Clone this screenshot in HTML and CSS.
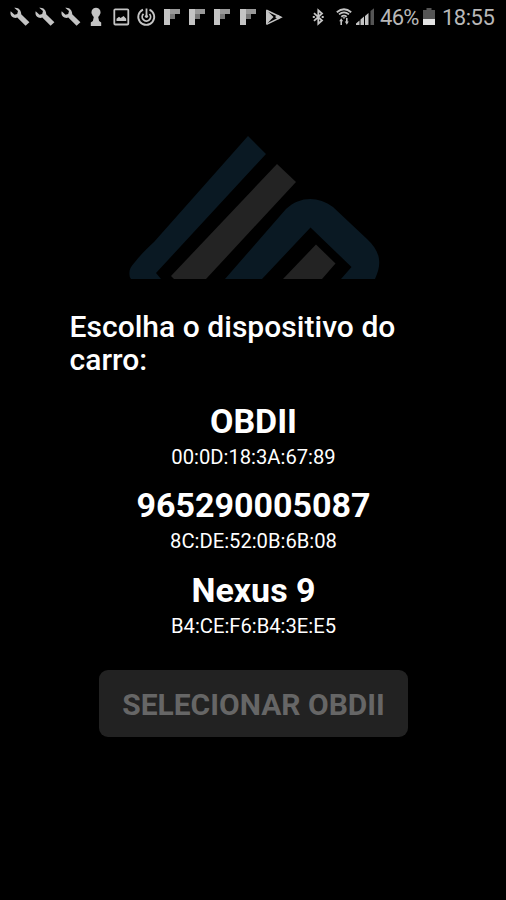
FILE: index.html
```
<!DOCTYPE html>
<html lang="pt">
<head>
    <meta charset="UTF-8">
    <meta name="viewport" content="width=device-width, initial-scale=1.0">
    <title>Escolha o dispositivo</title>
    <link rel="stylesheet" href="styles.css">
</head>
<body>

    <!-- Shared status icons -->
    <svg class="symbols">
        <symbol id="wrench" viewBox="0 0 20 20">
            <path d="M4.2.8 8 4.1 7.2 7 4.5 7.7.7 4.2C-.1 7 1 9.6 3.4 10.5c1.5.6 2.7.5 3.9.1l8.3 8.2 3.8-3.5-8.2-8C11.4 3.5 8.5 0 4.2.8z"/>
        </symbol>
        <symbol id="flip" viewBox="0 0 20 20">
            <path d="M2 2h6v16H2z"/>
            <path class="mid" d="M8 2h10v5H8z"/>
            <path class="dim" d="M8 7h5v5H8z"/>
        </symbol>
    </svg>

    <!-- Status Bar -->
    <header class="status-bar">
        <div class="notifications">
            <svg viewBox="0 0 20 20"><use href="#wrench"/></svg>
            <svg viewBox="0 0 20 20"><use href="#wrench"/></svg>
            <svg viewBox="0 0 20 20"><use href="#wrench"/></svg>
            <svg viewBox="0 0 20 20">
                <path d="M10 .8a4.7 4.7 0 0 0-3.3 8L7.8 10l-.9 4-2.1 1.5V19h10.4v-3.5L13.1 14l-.9-4 1.1-1.2A4.7 4.7 0 0 0 10 .8z"/>
            </svg>
            <svg viewBox="0 0 20 20">
                <rect class="line" x="3.3" y="2.3" width="14" height="15.2" rx="1"/>
                <path d="M5.5 14v-2.2l2.5-2 1.6 1.2 3-1.9 2.6 2.7V14z"/>
            </svg>
            <svg viewBox="0 0 20 20">
                <path class="line" d="M7 2.6a8 8 0 1 0 6.5 0M10.5 1.5V8M7.5 6.8a4.2 4.2 0 1 0 6 .2"/>
                <circle cx="10.5" cy="9.3" r="1.6"/>
            </svg>
            <svg viewBox="0 0 20 20"><use href="#flip"/></svg>
            <svg viewBox="0 0 20 20"><use href="#flip"/></svg>
            <svg viewBox="0 0 20 20"><use href="#flip"/></svg>
            <svg viewBox="0 0 20 20"><use href="#flip"/></svg>
            <svg viewBox="0 0 20 20">
                <path d="M3 2.5v15.3l7.5-7.8z"/>
                <path class="line thin" d="M3.5 3.2 18 10.2 3.5 17.3"/>
                <path d="M12 10.1l3-2.3 3.3 2.4-3.3 2.3z"/>
            </svg>
        </div>
        <div class="system">
            <svg class="bluetooth" viewBox="0 0 12 18">
                <path class="line" d="M2 5.2 10 12.5 6.3 15.7V2.3L10 5.5 2 12.8"/>
                <path d="M.8 8h2v2h-2zM9.7 8h2v2h-2z"/>
            </svg>
            <svg class="wifi" viewBox="0 0 16 18">
                <path class="line" d="M.8 4.2Q8-1.8 15.2 4.2M3 6.4q5-4 10 0M5.3 8.7q2.7-2 5.4 0"/>
                <path d="M6.4 9.2h3.2L8 11zM3.2 13.2l2-3 2 3h-1.2V17H4.4v-3.8zM8.8 13.6H10V10h1.6v3.6h1.2l-2 3.2z"/>
            </svg>
            <svg class="signal" viewBox="0 0 18 18">
                <path d="M0 17v-1.5l3.5-3V17zM4.5 17v-5.4L8 8.6V17zM9 17V8l3.5-3v12z"/>
                <path class="off" d="M14.5 17V3L18 .2V17z"/>
            </svg>
            <span class="percent">46%</span>
            <svg class="battery" viewBox="0 0 12 18">
                <path class="off" d="M3.5 0h5v2H12v9H0V2h3.5z"/>
                <path class="full" d="M0 11h12v6H0z"/>
            </svg>
            <span class="clock">18:55</span>
        </div>
    </header>

    <!-- Main Content -->
    <main class="content">
        <svg class="logo" viewBox="0 0 252 143">
            <path class="blue" d="M119 0 137 18 27 137 32 143H2Q0 141 .5 136C1 131 3 130 6 126Q12 118 25 106z"/>
            <path class="gray" d="M148 28 167 46 77 143H45L42 140z"/>
            <path class="blue" d="M96 143 157 73C171 60 189 60 204 71L238 103C252 116 253 128 246 143H212L222.5 131 181.5 91.5 133 143z"/>
            <path class="gray" d="M187 108.5 206.5 127.5 193 143H154z"/>
        </svg>

        <h1>Escolha o dispositivo do carro:</h1>

        <ul class="devices">
            <li>
                <strong>OBDII</strong>
                <span>00:0D:18:3A:67:89</span>
            </li>
            <li>
                <strong>965290005087</strong>
                <span>8C:DE:52:0B:6B:08</span>
            </li>
            <li>
                <strong>Nexus 9</strong>
                <span>B4:CE:F6:B4:3E:E5</span>
            </li>
        </ul>

        <button class="select" disabled>SELECIONAR OBDII</button>
    </main>

</body>
</html>
```
FILE: styles.css
```
/* General page styling */
body {
    font-family: Roboto, sans-serif;
    margin: 0;
    background: #000;
    color: #fff;
    height: 900px;
    overflow: hidden;
}

.symbols {
    display: none;
}

/* Status bar */
.status-bar {
    display: flex;
    justify-content: space-between;
    align-items: center;
    box-sizing: border-box;
    height: 34px;
    padding: 0 12px 0 10px;
    color: #b8b8b8;
}

.notifications {
    display: flex;
    gap: 5.3px;
}

.notifications svg {
    width: 20px;
    height: 20px;
}

.status-bar svg {
    fill: #c4c4c4;
}

.status-bar .line {
    fill: none;
    stroke: #c4c4c4;
    stroke-width: 1.8;
}

.status-bar .thin {
    stroke-width: 1.5;
}

.mid {
    fill: #999;
}

.dim {
    fill: #777;
}

.off {
    fill: #555;
}

.full {
    fill: #e4e4e4;
}

.system {
    display: flex;
    align-items: center;
    font-size: 22px;
    line-height: 34px;
}

.system svg {
    height: 18px;
}

.bluetooth {
    width: 12px;
    margin-right: 12px;
}

.wifi {
    width: 16px;
    margin-right: 4px;
}

.signal {
    width: 18px;
    margin-right: 6px;
}

.percent {
    width: 39px;
    padding-top: 1px;
    letter-spacing: -0.7px;
    margin-right: 4px;
}

.battery {
    width: 12px;
    margin-right: 7px;
}

.clock {
    width: 52px;
    padding-top: 1px;
    letter-spacing: -0.5px;
}

/* Main content area */
.content {
    display: flex;
    flex-direction: column;
    align-items: center;
    padding-top: 102px;
}

.logo {
    width: 252px;
    height: 143px;
    margin-left: 3px;
}

.blue {
    fill: #0a1923;
}

.gray {
    fill: #232323;
}

h1 {
    width: 367px;
    margin: 31px 0 24.7px;
    font-size: 30px;
    font-weight: 500;
    line-height: 33px;
    letter-spacing: 0.03px;
}

/* Device list */
.devices {
    display: flex;
    flex-direction: column;
    gap: 16.5px;
    margin: 0;
    padding: 0 0 0 1px;
    list-style: none;
    text-align: center;
}

.devices li {
    display: flex;
    flex-direction: column;
    gap: 4px;
}

.devices strong {
    font-size: 34px;
    font-weight: 700;
    line-height: 40px;
}

.devices span {
    font-size: 20.2px;
    line-height: 24px;
}

/* Select button */
.select {
    width: 309px;
    height: 67px;
    margin: 32.3px 0 0 1px;
    padding: 2px 0 0;
    border: none;
    border-radius: 9px;
    background: #222;
    color: #666;
    font-family: inherit;
    font-size: 30px;
    font-weight: 700;
}
```
